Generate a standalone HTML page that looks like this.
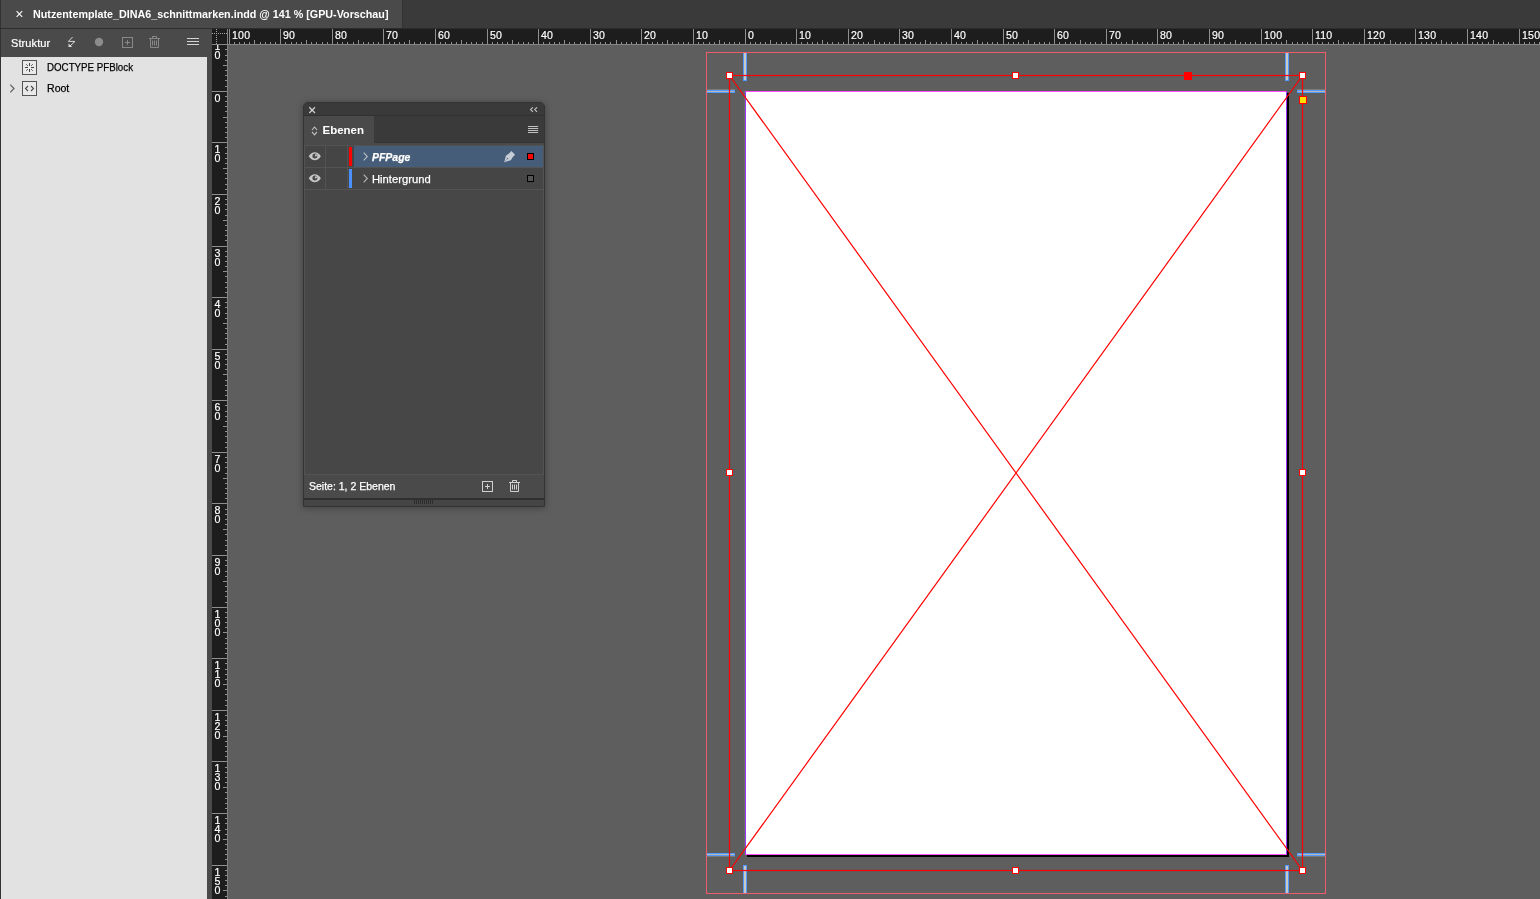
<!DOCTYPE html>
<html lang="de">
<head>
<meta charset="utf-8">
<title>Nutzentemplate_DINA6_schnittmarken.indd @ 141 % [GPU-Vorschau]</title>
<style>
*{box-sizing:border-box;margin:0;padding:0}
html,body{width:1540px;height:899px;overflow:hidden;background:#5e5e5e}
body{position:relative;will-change:transform;font-family:"Liberation Sans",sans-serif;font-size:11px;color:#fff;-webkit-font-smoothing:antialiased}
.abs{position:absolute}
svg{position:absolute;overflow:visible}

/* ---------- document tab bar ---------- */
#tabbar{position:absolute;left:0;top:0;width:1540px;height:29px;background:#3a3a3a;border-bottom:1px solid #2d2d2d}
#tab{position:absolute;left:0;top:0;width:403px;height:28px;background:#4a4a4a;border-left:1px solid #333;border-right:1px solid #323232}
#tab .ttl{position:absolute;left:31.5px;top:7px;font-weight:bold;font-size:11px;line-height:14px;white-space:nowrap;color:#fff;transform-origin:0 0;transform:scaleX(.977)}
#tab svg{left:14px;top:10px}

/* ---------- Struktur panel ---------- */
#struct{position:absolute;left:0;top:29px;width:212px;height:870px;background:#4a4a4a;border-left:1px solid #333}
#struct .hd{position:absolute;left:0;top:0;width:211px;height:28px}
#struct .hd .nm{position:absolute;left:10px;top:7px;font-size:11px;line-height:14px;color:#fff;-webkit-text-stroke:.2px #fff;letter-spacing:.1px}
#struct .bd{position:absolute;left:0;top:28px;width:206px;height:842px;background:#e2e2e2;color:#000}
#struct .row{position:absolute;left:0;width:206px;height:21px}
#struct .row .tx{position:absolute;left:45.5px;top:3px;font-size:11px;line-height:14px;color:#000;white-space:nowrap;transform-origin:0 0;-webkit-text-stroke:.25px #000}
#struct .ico{position:absolute;left:21px;top:3px;width:15px;height:15px;border:1px solid #555;background:#e9e9e9}

/* ---------- rulers ---------- */
#hr{position:absolute;left:212px;top:29px;width:1328px;height:16px;background:#1d1d1d;border-bottom:1px solid #868686;overflow:hidden}
#hr .ticks{left:-212px;top:0;fill:#8f8f8f}
#hr .hl{position:absolute;top:0;margin-left:-212px;font-size:11px;line-height:13px;color:#fff;-webkit-text-stroke:.18px #fff;letter-spacing:.2px;transform-origin:0 0;transform:scaleX(.96)}
#vr{position:absolute;left:212px;top:29px;width:16px;height:870px;background:#1d1d1d;border-right:1px solid #828282;overflow:hidden}
#vr .ticks{left:0;top:0;fill:#8f8f8f}
#vr .vl{position:absolute;left:1.6px;width:7px;text-align:center;font-size:11px;line-height:9px;color:#fff;-webkit-text-stroke:.18px #fff;transform-origin:50% 0;transform:scaleX(.97)}
#corner{position:absolute;left:212px;top:29px;width:16px;height:16px;background:#1d1d1d;border-right:1px solid #828282;border-bottom:1px solid #868686}

/* ---------- canvas / page ---------- */
#slug{position:absolute;left:706px;top:52px;width:620px;height:842px;border:1px solid #ee5c6c}
#shadow{position:absolute;left:747px;top:93px;width:542px;height:764px;background:#000}
#page{position:absolute;left:745px;top:91px;width:542px;height:764px;background:#fff;box-shadow:-1px 0 0 rgba(120,130,105,.45);border-style:solid;border-width:1px;border-color:#ff4dff #9933ff #ff4dff #9933ff}
.cv{position:absolute;width:4px;height:28px;background:#cac8c4;border-left:1px solid #4f99ff;border-right:1px solid #4f99ff}
.cv.t{border-bottom:1px solid #4f99ff}
.cv.b{border-top:1px solid #4f99ff}
.ch{position:absolute;width:28px;height:3px;background:#b9b9b9;border-top:1px solid #4f99ff;border-bottom:1px solid #4f99ff}
.ch.l{border-right:1px solid #4f99ff}
.ch.r{border-left:1px solid #4f99ff}
.ch.u{box-shadow:0 -1px 0 rgba(150,145,135,.55)}
.ch.d{box-shadow:0 1px 0 rgba(150,145,135,.55)}
.hnd{position:absolute;width:7px;height:7px;background:#fff;border:1px solid #f00}

/* ---------- Ebenen panel ---------- */
#lay{position:absolute;left:303px;top:102px;width:242px;height:405px;background:#4a4a4a;border:1px solid #333;border-radius:5px 5px 0 0;box-shadow:0 1px 7px rgba(0,0,0,.32);overflow:hidden}
#lay .tb{position:absolute;left:0;top:0;width:240px;height:13px;background:#3a3a3a;border-bottom:1px solid #303030}
#lay .tabs{position:absolute;left:0;top:13px;width:240px;height:27px;background:#3a3a3a;border-bottom:1px solid #353535}
#lay .tab{position:absolute;left:0;top:0;width:70px;height:28px;background:#4a4a4a}
#lay .tab .nm{position:absolute;left:18.5px;top:6.6px;font-weight:bold;font-size:11.5px;line-height:14px;color:#fff;transform-origin:0 0;transform:scaleX(1.0)}
#lay .ls{position:absolute;left:0;top:42px;width:240px;height:330px;border:1px solid #535353;background:#474747}
#lay .r{position:absolute;left:0;width:238px;height:22px;border-bottom:1px solid #535353;background:#454545}
#lay .r .c1{position:absolute;left:0;top:0;width:21px;height:21px;border-right:1px solid #535353}
#lay .r .c2{position:absolute;left:21px;top:0;width:22px;height:21px;border-right:1px solid #535353}
#lay .r .bar{position:absolute;left:44px;top:1px;width:3px;height:19px}
#lay .r .sel{position:absolute;left:49px;top:0;width:189px;height:21px;background:#465d7a}
#lay .r .tx{position:absolute;left:67px;top:4px;font-size:11px;line-height:14px;color:#fff;white-space:nowrap;transform-origin:0 0;-webkit-text-stroke:.25px #fff}
#lay .r .sq{position:absolute;left:222px;top:7px;width:7px;height:7px;border:1px solid #000}
#lay .ft{position:absolute;left:0;top:372px;width:240px;height:23px}
#lay .ft .tx{position:absolute;left:5.2px;top:4px;font-size:11px;line-height:14px;color:#fff;white-space:nowrap;transform-origin:0 0;transform:scaleX(.955);-webkit-text-stroke:.25px #fff}
#lay .gr{position:absolute;left:0;top:395px;width:240px;height:9px;background:#454545;border-top:2px solid #2f2f2f}
</style>
</head>
<body>

<!-- document tab bar -->
<div id="tabbar">
  <div id="tab">
    <svg width="8" height="8" viewBox="0 0 8 8"><path d="M1.6 1.2L7.2 6.8M7.2 1.2L1.6 6.8" stroke="#fff" stroke-width="1.1" fill="none"/></svg>
    <div class="ttl">Nutzentemplate_DINA6_schnittmarken.indd @ 141 % [GPU-Vorschau]</div>
  </div>
</div>

<!-- Struktur panel -->
<div id="struct">
  <div class="hd">
    <div class="nm">Struktur</div>
    <svg style="left:66px;top:7px" width="10" height="12" viewBox="0 0 10 12"><path d="M5.6 1L1.4 5.4H8L2.6 10.4" stroke="#d8d8d8" stroke-width="1" fill="none"/><path d="M1.5 7.4V11H5.3Z" fill="#d8d8d8"/></svg>
    <svg style="left:93px;top:8px" width="10" height="10" viewBox="0 0 10 10"><circle cx="5" cy="5" r="4.2" fill="#8c8c8c"/></svg>
    <svg style="left:121px;top:8px" width="11" height="11" viewBox="0 0 11 11"><rect x=".5" y=".5" width="10" height="10" fill="none" stroke="#888"/><path d="M3 5.5H8M5.5 3V8" stroke="#888" fill="none"/></svg>
    <svg style="left:148px;top:7px" width="11" height="12" viewBox="0 0 11 12"><path d="M0 2.5H11M3.5 2.5V.5H7.5V2.5M1.5 2.5V11.5H9.5V2.5M3.5 4.5V9.5M5.5 4.5V9.5M7.5 4.5V9.5" stroke="#888" fill="none"/></svg>
    <svg style="left:186px;top:9px" width="12" height="8" viewBox="0 0 12 8"><path d="M0 .5H12M0 3.5H12M0 6.5H12" stroke="#d4d4d4" fill="none"/></svg>
  </div>
  <div class="bd">
    <div class="row" style="top:0">
      <div class="ico"><svg width="13" height="13" viewBox="0 0 13 13" style="left:0;top:0"><path d="M6.5 2V5M6.5 8V11M2 6.5H5M8 6.5H11M3.3 3.3L4.8 4.8M8.2 8.2L9.7 9.7M9.7 3.3L8.2 4.8M3.3 9.7L4.8 8.2" stroke="#444" stroke-width="1" fill="none"/></svg></div>
      <div class="tx" style="transform:scaleX(.885)">DOCTYPE PFBlock</div>
    </div>
    <div class="row" style="top:21px">
      <svg style="left:8px;top:6px" width="6" height="9" viewBox="0 0 6 9"><path d="M1.3 .7L5 4.5L1.3 8.3" stroke="#606060" stroke-width="1.2" fill="none"/></svg>
      <div class="ico"><svg width="13" height="13" viewBox="0 0 13 13" style="left:0;top:0"><path d="M5 4L2.5 6.5L5 9M8 4L10.5 6.5L8 9" stroke="#484848" stroke-width="1.1" fill="none"/></svg></div>
      <div class="tx" style="transform:scaleX(.96)">Root</div>
    </div>
  </div>
</div>

<!-- rulers -->
<div id="hr"><svg class="ticks" width="1540" height="16" viewBox="0 0 1540 16"><rect x="229" y="0" width="1" height="15"/><rect x="234" y="13" width="1" height="2"/><rect x="239" y="13" width="1" height="2"/><rect x="244" y="13" width="1" height="2"/><rect x="249" y="13" width="1" height="2"/><rect x="254" y="11" width="1" height="4"/><rect x="260" y="13" width="1" height="2"/><rect x="265" y="13" width="1" height="2"/><rect x="270" y="13" width="1" height="2"/><rect x="275" y="13" width="1" height="2"/><rect x="280" y="0" width="1" height="15"/><rect x="285" y="13" width="1" height="2"/><rect x="291" y="13" width="1" height="2"/><rect x="296" y="13" width="1" height="2"/><rect x="301" y="13" width="1" height="2"/><rect x="306" y="11" width="1" height="4"/><rect x="311" y="13" width="1" height="2"/><rect x="316" y="13" width="1" height="2"/><rect x="322" y="13" width="1" height="2"/><rect x="327" y="13" width="1" height="2"/><rect x="332" y="0" width="1" height="15"/><rect x="337" y="13" width="1" height="2"/><rect x="342" y="13" width="1" height="2"/><rect x="347" y="13" width="1" height="2"/><rect x="353" y="13" width="1" height="2"/><rect x="358" y="11" width="1" height="4"/><rect x="363" y="13" width="1" height="2"/><rect x="368" y="13" width="1" height="2"/><rect x="373" y="13" width="1" height="2"/><rect x="378" y="13" width="1" height="2"/><rect x="383" y="0" width="1" height="15"/><rect x="389" y="13" width="1" height="2"/><rect x="394" y="13" width="1" height="2"/><rect x="399" y="13" width="1" height="2"/><rect x="404" y="13" width="1" height="2"/><rect x="409" y="11" width="1" height="4"/><rect x="414" y="13" width="1" height="2"/><rect x="420" y="13" width="1" height="2"/><rect x="425" y="13" width="1" height="2"/><rect x="430" y="13" width="1" height="2"/><rect x="435" y="0" width="1" height="15"/><rect x="440" y="13" width="1" height="2"/><rect x="445" y="13" width="1" height="2"/><rect x="451" y="13" width="1" height="2"/><rect x="456" y="13" width="1" height="2"/><rect x="461" y="11" width="1" height="4"/><rect x="466" y="13" width="1" height="2"/><rect x="471" y="13" width="1" height="2"/><rect x="476" y="13" width="1" height="2"/><rect x="482" y="13" width="1" height="2"/><rect x="487" y="0" width="1" height="15"/><rect x="492" y="13" width="1" height="2"/><rect x="497" y="13" width="1" height="2"/><rect x="502" y="13" width="1" height="2"/><rect x="507" y="13" width="1" height="2"/><rect x="512" y="11" width="1" height="4"/><rect x="518" y="13" width="1" height="2"/><rect x="523" y="13" width="1" height="2"/><rect x="528" y="13" width="1" height="2"/><rect x="533" y="13" width="1" height="2"/><rect x="538" y="0" width="1" height="15"/><rect x="543" y="13" width="1" height="2"/><rect x="549" y="13" width="1" height="2"/><rect x="554" y="13" width="1" height="2"/><rect x="559" y="13" width="1" height="2"/><rect x="564" y="11" width="1" height="4"/><rect x="569" y="13" width="1" height="2"/><rect x="574" y="13" width="1" height="2"/><rect x="580" y="13" width="1" height="2"/><rect x="585" y="13" width="1" height="2"/><rect x="590" y="0" width="1" height="15"/><rect x="595" y="13" width="1" height="2"/><rect x="600" y="13" width="1" height="2"/><rect x="605" y="13" width="1" height="2"/><rect x="610" y="13" width="1" height="2"/><rect x="616" y="11" width="1" height="4"/><rect x="621" y="13" width="1" height="2"/><rect x="626" y="13" width="1" height="2"/><rect x="631" y="13" width="1" height="2"/><rect x="636" y="13" width="1" height="2"/><rect x="641" y="0" width="1" height="15"/><rect x="647" y="13" width="1" height="2"/><rect x="652" y="13" width="1" height="2"/><rect x="657" y="13" width="1" height="2"/><rect x="662" y="13" width="1" height="2"/><rect x="667" y="11" width="1" height="4"/><rect x="672" y="13" width="1" height="2"/><rect x="678" y="13" width="1" height="2"/><rect x="683" y="13" width="1" height="2"/><rect x="688" y="13" width="1" height="2"/><rect x="693" y="0" width="1" height="15"/><rect x="698" y="13" width="1" height="2"/><rect x="703" y="13" width="1" height="2"/><rect x="709" y="13" width="1" height="2"/><rect x="714" y="13" width="1" height="2"/><rect x="719" y="11" width="1" height="4"/><rect x="724" y="13" width="1" height="2"/><rect x="729" y="13" width="1" height="2"/><rect x="734" y="13" width="1" height="2"/><rect x="739" y="13" width="1" height="2"/><rect x="745" y="0" width="1" height="15"/><rect x="750" y="13" width="1" height="2"/><rect x="755" y="13" width="1" height="2"/><rect x="760" y="13" width="1" height="2"/><rect x="765" y="13" width="1" height="2"/><rect x="770" y="11" width="1" height="4"/><rect x="776" y="13" width="1" height="2"/><rect x="781" y="13" width="1" height="2"/><rect x="786" y="13" width="1" height="2"/><rect x="791" y="13" width="1" height="2"/><rect x="796" y="0" width="1" height="15"/><rect x="801" y="13" width="1" height="2"/><rect x="807" y="13" width="1" height="2"/><rect x="812" y="13" width="1" height="2"/><rect x="817" y="13" width="1" height="2"/><rect x="822" y="11" width="1" height="4"/><rect x="827" y="13" width="1" height="2"/><rect x="832" y="13" width="1" height="2"/><rect x="838" y="13" width="1" height="2"/><rect x="843" y="13" width="1" height="2"/><rect x="848" y="0" width="1" height="15"/><rect x="853" y="13" width="1" height="2"/><rect x="858" y="13" width="1" height="2"/><rect x="863" y="13" width="1" height="2"/><rect x="868" y="13" width="1" height="2"/><rect x="874" y="11" width="1" height="4"/><rect x="879" y="13" width="1" height="2"/><rect x="884" y="13" width="1" height="2"/><rect x="889" y="13" width="1" height="2"/><rect x="894" y="13" width="1" height="2"/><rect x="899" y="0" width="1" height="15"/><rect x="905" y="13" width="1" height="2"/><rect x="910" y="13" width="1" height="2"/><rect x="915" y="13" width="1" height="2"/><rect x="920" y="13" width="1" height="2"/><rect x="925" y="11" width="1" height="4"/><rect x="930" y="13" width="1" height="2"/><rect x="936" y="13" width="1" height="2"/><rect x="941" y="13" width="1" height="2"/><rect x="946" y="13" width="1" height="2"/><rect x="951" y="0" width="1" height="15"/><rect x="956" y="13" width="1" height="2"/><rect x="961" y="13" width="1" height="2"/><rect x="966" y="13" width="1" height="2"/><rect x="972" y="13" width="1" height="2"/><rect x="977" y="11" width="1" height="4"/><rect x="982" y="13" width="1" height="2"/><rect x="987" y="13" width="1" height="2"/><rect x="992" y="13" width="1" height="2"/><rect x="997" y="13" width="1" height="2"/><rect x="1003" y="0" width="1" height="15"/><rect x="1008" y="13" width="1" height="2"/><rect x="1013" y="13" width="1" height="2"/><rect x="1018" y="13" width="1" height="2"/><rect x="1023" y="13" width="1" height="2"/><rect x="1028" y="11" width="1" height="4"/><rect x="1034" y="13" width="1" height="2"/><rect x="1039" y="13" width="1" height="2"/><rect x="1044" y="13" width="1" height="2"/><rect x="1049" y="13" width="1" height="2"/><rect x="1054" y="0" width="1" height="15"/><rect x="1059" y="13" width="1" height="2"/><rect x="1065" y="13" width="1" height="2"/><rect x="1070" y="13" width="1" height="2"/><rect x="1075" y="13" width="1" height="2"/><rect x="1080" y="11" width="1" height="4"/><rect x="1085" y="13" width="1" height="2"/><rect x="1090" y="13" width="1" height="2"/><rect x="1095" y="13" width="1" height="2"/><rect x="1101" y="13" width="1" height="2"/><rect x="1106" y="0" width="1" height="15"/><rect x="1111" y="13" width="1" height="2"/><rect x="1116" y="13" width="1" height="2"/><rect x="1121" y="13" width="1" height="2"/><rect x="1126" y="13" width="1" height="2"/><rect x="1132" y="11" width="1" height="4"/><rect x="1137" y="13" width="1" height="2"/><rect x="1142" y="13" width="1" height="2"/><rect x="1147" y="13" width="1" height="2"/><rect x="1152" y="13" width="1" height="2"/><rect x="1157" y="0" width="1" height="15"/><rect x="1163" y="13" width="1" height="2"/><rect x="1168" y="13" width="1" height="2"/><rect x="1173" y="13" width="1" height="2"/><rect x="1178" y="13" width="1" height="2"/><rect x="1183" y="11" width="1" height="4"/><rect x="1188" y="13" width="1" height="2"/><rect x="1194" y="13" width="1" height="2"/><rect x="1199" y="13" width="1" height="2"/><rect x="1204" y="13" width="1" height="2"/><rect x="1209" y="0" width="1" height="15"/><rect x="1214" y="13" width="1" height="2"/><rect x="1219" y="13" width="1" height="2"/><rect x="1224" y="13" width="1" height="2"/><rect x="1230" y="13" width="1" height="2"/><rect x="1235" y="11" width="1" height="4"/><rect x="1240" y="13" width="1" height="2"/><rect x="1245" y="13" width="1" height="2"/><rect x="1250" y="13" width="1" height="2"/><rect x="1255" y="13" width="1" height="2"/><rect x="1261" y="0" width="1" height="15"/><rect x="1266" y="13" width="1" height="2"/><rect x="1271" y="13" width="1" height="2"/><rect x="1276" y="13" width="1" height="2"/><rect x="1281" y="13" width="1" height="2"/><rect x="1286" y="11" width="1" height="4"/><rect x="1292" y="13" width="1" height="2"/><rect x="1297" y="13" width="1" height="2"/><rect x="1302" y="13" width="1" height="2"/><rect x="1307" y="13" width="1" height="2"/><rect x="1312" y="0" width="1" height="15"/><rect x="1317" y="13" width="1" height="2"/><rect x="1322" y="13" width="1" height="2"/><rect x="1328" y="13" width="1" height="2"/><rect x="1333" y="13" width="1" height="2"/><rect x="1338" y="11" width="1" height="4"/><rect x="1343" y="13" width="1" height="2"/><rect x="1348" y="13" width="1" height="2"/><rect x="1353" y="13" width="1" height="2"/><rect x="1359" y="13" width="1" height="2"/><rect x="1364" y="0" width="1" height="15"/><rect x="1369" y="13" width="1" height="2"/><rect x="1374" y="13" width="1" height="2"/><rect x="1379" y="13" width="1" height="2"/><rect x="1384" y="13" width="1" height="2"/><rect x="1390" y="11" width="1" height="4"/><rect x="1395" y="13" width="1" height="2"/><rect x="1400" y="13" width="1" height="2"/><rect x="1405" y="13" width="1" height="2"/><rect x="1410" y="13" width="1" height="2"/><rect x="1415" y="0" width="1" height="15"/><rect x="1421" y="13" width="1" height="2"/><rect x="1426" y="13" width="1" height="2"/><rect x="1431" y="13" width="1" height="2"/><rect x="1436" y="13" width="1" height="2"/><rect x="1441" y="11" width="1" height="4"/><rect x="1446" y="13" width="1" height="2"/><rect x="1451" y="13" width="1" height="2"/><rect x="1457" y="13" width="1" height="2"/><rect x="1462" y="13" width="1" height="2"/><rect x="1467" y="0" width="1" height="15"/><rect x="1472" y="13" width="1" height="2"/><rect x="1477" y="13" width="1" height="2"/><rect x="1482" y="13" width="1" height="2"/><rect x="1488" y="13" width="1" height="2"/><rect x="1493" y="11" width="1" height="4"/><rect x="1498" y="13" width="1" height="2"/><rect x="1503" y="13" width="1" height="2"/><rect x="1508" y="13" width="1" height="2"/><rect x="1513" y="13" width="1" height="2"/><rect x="1519" y="0" width="1" height="15"/><rect x="1524" y="13" width="1" height="2"/><rect x="1529" y="13" width="1" height="2"/><rect x="1534" y="13" width="1" height="2"/><rect x="1539" y="13" width="1" height="2"/></svg><span class="hl" style="left:231.7px">100</span><span class="hl" style="left:282.7px">90</span><span class="hl" style="left:334.7px">80</span><span class="hl" style="left:385.7px">70</span><span class="hl" style="left:437.7px">60</span><span class="hl" style="left:489.7px">50</span><span class="hl" style="left:540.7px">40</span><span class="hl" style="left:592.7px">30</span><span class="hl" style="left:643.7px">20</span><span class="hl" style="left:695.7px">10</span><span class="hl" style="left:747.7px">0</span><span class="hl" style="left:798.7px">10</span><span class="hl" style="left:850.7px">20</span><span class="hl" style="left:901.7px">30</span><span class="hl" style="left:953.7px">40</span><span class="hl" style="left:1005.7px">50</span><span class="hl" style="left:1056.7px">60</span><span class="hl" style="left:1108.7px">70</span><span class="hl" style="left:1159.7px">80</span><span class="hl" style="left:1211.7px">90</span><span class="hl" style="left:1263.7px">100</span><span class="hl" style="left:1314.7px">110</span><span class="hl" style="left:1366.7px">120</span><span class="hl" style="left:1417.7px">130</span><span class="hl" style="left:1469.7px">140</span><span class="hl" style="left:1521.7px">150</span></div>
<div id="vr"><svg class="ticks" width="16" height="870" viewBox="0 0 16 870"><rect x="13" y="20" width="2" height="1"/><rect x="13" y="26" width="2" height="1"/><rect x="13" y="31" width="2" height="1"/><rect x="11" y="36" width="4" height="1"/><rect x="13" y="41" width="2" height="1"/><rect x="13" y="46" width="2" height="1"/><rect x="13" y="51" width="2" height="1"/><rect x="13" y="57" width="2" height="1"/><rect x="0" y="62" width="15" height="1"/><rect x="13" y="67" width="2" height="1"/><rect x="13" y="72" width="2" height="1"/><rect x="13" y="77" width="2" height="1"/><rect x="13" y="82" width="2" height="1"/><rect x="11" y="88" width="4" height="1"/><rect x="13" y="93" width="2" height="1"/><rect x="13" y="98" width="2" height="1"/><rect x="13" y="103" width="2" height="1"/><rect x="13" y="108" width="2" height="1"/><rect x="0" y="113" width="15" height="1"/><rect x="13" y="118" width="2" height="1"/><rect x="13" y="124" width="2" height="1"/><rect x="13" y="129" width="2" height="1"/><rect x="13" y="134" width="2" height="1"/><rect x="11" y="139" width="4" height="1"/><rect x="13" y="144" width="2" height="1"/><rect x="13" y="149" width="2" height="1"/><rect x="13" y="155" width="2" height="1"/><rect x="13" y="160" width="2" height="1"/><rect x="0" y="165" width="15" height="1"/><rect x="13" y="170" width="2" height="1"/><rect x="13" y="175" width="2" height="1"/><rect x="13" y="180" width="2" height="1"/><rect x="13" y="186" width="2" height="1"/><rect x="11" y="191" width="4" height="1"/><rect x="13" y="196" width="2" height="1"/><rect x="13" y="201" width="2" height="1"/><rect x="13" y="206" width="2" height="1"/><rect x="13" y="211" width="2" height="1"/><rect x="0" y="217" width="15" height="1"/><rect x="13" y="222" width="2" height="1"/><rect x="13" y="227" width="2" height="1"/><rect x="13" y="232" width="2" height="1"/><rect x="13" y="237" width="2" height="1"/><rect x="11" y="242" width="4" height="1"/><rect x="13" y="247" width="2" height="1"/><rect x="13" y="253" width="2" height="1"/><rect x="13" y="258" width="2" height="1"/><rect x="13" y="263" width="2" height="1"/><rect x="0" y="268" width="15" height="1"/><rect x="13" y="273" width="2" height="1"/><rect x="13" y="278" width="2" height="1"/><rect x="13" y="284" width="2" height="1"/><rect x="13" y="289" width="2" height="1"/><rect x="11" y="294" width="4" height="1"/><rect x="13" y="299" width="2" height="1"/><rect x="13" y="304" width="2" height="1"/><rect x="13" y="309" width="2" height="1"/><rect x="13" y="315" width="2" height="1"/><rect x="0" y="320" width="15" height="1"/><rect x="13" y="325" width="2" height="1"/><rect x="13" y="330" width="2" height="1"/><rect x="13" y="335" width="2" height="1"/><rect x="13" y="340" width="2" height="1"/><rect x="11" y="345" width="4" height="1"/><rect x="13" y="351" width="2" height="1"/><rect x="13" y="356" width="2" height="1"/><rect x="13" y="361" width="2" height="1"/><rect x="13" y="366" width="2" height="1"/><rect x="0" y="371" width="15" height="1"/><rect x="13" y="376" width="2" height="1"/><rect x="13" y="382" width="2" height="1"/><rect x="13" y="387" width="2" height="1"/><rect x="13" y="392" width="2" height="1"/><rect x="11" y="397" width="4" height="1"/><rect x="13" y="402" width="2" height="1"/><rect x="13" y="407" width="2" height="1"/><rect x="13" y="413" width="2" height="1"/><rect x="13" y="418" width="2" height="1"/><rect x="0" y="423" width="15" height="1"/><rect x="13" y="428" width="2" height="1"/><rect x="13" y="433" width="2" height="1"/><rect x="13" y="438" width="2" height="1"/><rect x="13" y="444" width="2" height="1"/><rect x="11" y="449" width="4" height="1"/><rect x="13" y="454" width="2" height="1"/><rect x="13" y="459" width="2" height="1"/><rect x="13" y="464" width="2" height="1"/><rect x="13" y="469" width="2" height="1"/><rect x="0" y="474" width="15" height="1"/><rect x="13" y="480" width="2" height="1"/><rect x="13" y="485" width="2" height="1"/><rect x="13" y="490" width="2" height="1"/><rect x="13" y="495" width="2" height="1"/><rect x="11" y="500" width="4" height="1"/><rect x="13" y="505" width="2" height="1"/><rect x="13" y="511" width="2" height="1"/><rect x="13" y="516" width="2" height="1"/><rect x="13" y="521" width="2" height="1"/><rect x="0" y="526" width="15" height="1"/><rect x="13" y="531" width="2" height="1"/><rect x="13" y="536" width="2" height="1"/><rect x="13" y="542" width="2" height="1"/><rect x="13" y="547" width="2" height="1"/><rect x="11" y="552" width="4" height="1"/><rect x="13" y="557" width="2" height="1"/><rect x="13" y="562" width="2" height="1"/><rect x="13" y="567" width="2" height="1"/><rect x="13" y="573" width="2" height="1"/><rect x="0" y="578" width="15" height="1"/><rect x="13" y="583" width="2" height="1"/><rect x="13" y="588" width="2" height="1"/><rect x="13" y="593" width="2" height="1"/><rect x="13" y="598" width="2" height="1"/><rect x="11" y="603" width="4" height="1"/><rect x="13" y="609" width="2" height="1"/><rect x="13" y="614" width="2" height="1"/><rect x="13" y="619" width="2" height="1"/><rect x="13" y="624" width="2" height="1"/><rect x="0" y="629" width="15" height="1"/><rect x="13" y="634" width="2" height="1"/><rect x="13" y="640" width="2" height="1"/><rect x="13" y="645" width="2" height="1"/><rect x="13" y="650" width="2" height="1"/><rect x="11" y="655" width="4" height="1"/><rect x="13" y="660" width="2" height="1"/><rect x="13" y="665" width="2" height="1"/><rect x="13" y="671" width="2" height="1"/><rect x="13" y="676" width="2" height="1"/><rect x="0" y="681" width="15" height="1"/><rect x="13" y="686" width="2" height="1"/><rect x="13" y="691" width="2" height="1"/><rect x="13" y="696" width="2" height="1"/><rect x="13" y="701" width="2" height="1"/><rect x="11" y="707" width="4" height="1"/><rect x="13" y="712" width="2" height="1"/><rect x="13" y="717" width="2" height="1"/><rect x="13" y="722" width="2" height="1"/><rect x="13" y="727" width="2" height="1"/><rect x="0" y="732" width="15" height="1"/><rect x="13" y="738" width="2" height="1"/><rect x="13" y="743" width="2" height="1"/><rect x="13" y="748" width="2" height="1"/><rect x="13" y="753" width="2" height="1"/><rect x="11" y="758" width="4" height="1"/><rect x="13" y="763" width="2" height="1"/><rect x="13" y="769" width="2" height="1"/><rect x="13" y="774" width="2" height="1"/><rect x="13" y="779" width="2" height="1"/><rect x="0" y="784" width="15" height="1"/><rect x="13" y="789" width="2" height="1"/><rect x="13" y="794" width="2" height="1"/><rect x="13" y="800" width="2" height="1"/><rect x="13" y="805" width="2" height="1"/><rect x="11" y="810" width="4" height="1"/><rect x="13" y="815" width="2" height="1"/><rect x="13" y="820" width="2" height="1"/><rect x="13" y="825" width="2" height="1"/><rect x="13" y="830" width="2" height="1"/><rect x="0" y="836" width="15" height="1"/><rect x="13" y="841" width="2" height="1"/><rect x="13" y="846" width="2" height="1"/><rect x="13" y="851" width="2" height="1"/><rect x="13" y="856" width="2" height="1"/><rect x="11" y="861" width="4" height="1"/><rect x="13" y="867" width="2" height="1"/></svg><span class="vl" style="top:13px">1<br>0</span><span class="vl" style="top:65px">0</span><span class="vl" style="top:116px">1<br>0</span><span class="vl" style="top:168px">2<br>0</span><span class="vl" style="top:220px">3<br>0</span><span class="vl" style="top:271px">4<br>0</span><span class="vl" style="top:323px">5<br>0</span><span class="vl" style="top:374px">6<br>0</span><span class="vl" style="top:426px">7<br>0</span><span class="vl" style="top:477px">8<br>0</span><span class="vl" style="top:529px">9<br>0</span><span class="vl" style="top:581px">1<br>0<br>0</span><span class="vl" style="top:632px">1<br>1<br>0</span><span class="vl" style="top:684px">1<br>2<br>0</span><span class="vl" style="top:735px">1<br>3<br>0</span><span class="vl" style="top:787px">1<br>4<br>0</span><span class="vl" style="top:839px">1<br>5<br>0</span></div>
<div id="corner">
  <svg width="16" height="16" viewBox="0 0 16 16" style="left:0;top:0"><path d="M0 4.5H15M4.5 0V15" stroke="#a4a4a4" stroke-width="1" stroke-dasharray="1 1" fill="none"/></svg>
</div>

<!-- pasteboard -->
<div id="slug"></div>
<div id="shadow"></div>
<div id="page"></div>
<div class="cv t" style="left:743px;top:53px"></div>
<div class="cv t" style="left:1285px;top:53px"></div>
<div class="cv b" style="left:743px;top:865px"></div>
<div class="cv b" style="left:1285px;top:865px"></div>
<div class="ch l u" style="left:707px;top:90px"></div>
<div class="ch r u" style="left:1297px;top:90px"></div>
<div class="ch l d" style="left:707px;top:853px"></div>
<div class="ch r d" style="left:1297px;top:853px"></div>
<svg width="1540" height="899" viewBox="0 0 1540 899" style="left:0;top:0">
  <g stroke="#ff0000" stroke-width="1.2" fill="none">
    <rect x="729.5" y="75.5" width="573" height="795"/>
    <path d="M729.5 75.5L1302.5 870.5M1302.5 75.5L729.5 870.5"/>
  </g>
</svg>
<div class="hnd" style="left:726px;top:72px"></div>
<div class="hnd" style="left:1012px;top:72px"></div>
<div class="hnd" style="left:1299px;top:72px"></div>
<div class="hnd" style="left:726px;top:469px"></div>
<div class="hnd" style="left:1299px;top:469px"></div>
<div class="hnd" style="left:726px;top:867px"></div>
<div class="hnd" style="left:1012px;top:867px"></div>
<div class="hnd" style="left:1299px;top:867px"></div>
<div class="abs" style="left:1184px;top:72px;width:8px;height:8px;background:#f00"></div>
<div class="hnd" style="left:1299px;top:96px;width:8px;height:8px;background:#ffe000"></div>

<!-- Ebenen panel -->
<div id="lay">
  <div class="tb">
    <svg style="left:5px;top:4px" width="7" height="7" viewBox="0 0 7 7"><path d="M.3 .3L6 6M6 .3L.3 6" stroke="#d0d0d0" stroke-width="1.25" fill="none"/></svg>
    <svg style="left:226px;top:4px" width="8" height="6" viewBox="0 0 8 6"><path d="M2.9 .3L.6 2.6L2.9 4.9M7 .3L4.7 2.6L7 4.9" stroke="#c6c6c6" stroke-width="1.15" fill="none" stroke-linejoin="miter"/></svg>
  </div>
  <div class="tabs">
    <div class="tab">
      <svg style="left:7px;top:10px" width="7" height="10" viewBox="0 0 7 10"><path d="M1 4L3.5 1L6 4M1 5.8L3.5 8.8L6 5.8" stroke="#c4c4c4" stroke-width="1.1" fill="none"/></svg>
      <div class="nm">Ebenen</div>
    </div>
    <svg style="left:224px;top:10px" width="11" height="8" viewBox="0 0 11 8"><path d="M0 .5H10.2M0 2.5H10.2M0 4.5H10.2M0 6.5H10.2" stroke="#c0c0c0" stroke-width="1" fill="none"/></svg>
  </div>
  <div class="ls">
    <div class="r" style="top:0">
      <div class="c1"><svg style="left:3px;top:5px" width="14" height="11" viewBox="0 0 14 11"><g transform="translate(.5 .7)"><path d="M.2 4.5C1.9 1.7 4.1 .5 6.3 .5S10.7 1.7 12.4 4.5C10.7 7.3 8.5 8.5 6.3 8.5S1.9 7.3 .2 4.5Z" fill="#c8c8c8"/><circle cx="6.4" cy="4.4" r="2.5" fill="#4a4a4a"/><circle cx="7.4" cy="3.6" r="1.1" fill="#c8c8c8"/></g></svg></div>
      <div class="c2"></div>
      <div class="bar" style="background:#ff0000"></div>
      <div class="sel"></div>
      <svg style="left:58px;top:6px" width="5" height="9" viewBox="0 0 5 9"><path d="M.7 .7L4.3 4.5L.7 8.3" stroke="#b8bcc2" stroke-width="1.1" fill="none"/></svg>
      <div class="tx" style="font-weight:bold;font-style:italic;transform:scaleX(.95)">PFPage</div>
      <svg style="left:198px;top:5px" width="13" height="12" viewBox="0 0 13 12"><path d="M8.4 0L12.1 3.7L9.8 6L7.8 9.2L1.2 11.2L2.9 4.7L6 2.4Z" fill="#c5ccd6"/><circle cx="4.5" cy="7.4" r=".75" fill="#5a6f8a"/><path d="M2 10.4L4 8" stroke="#7f8fa6" stroke-width=".6"/></svg>
      <div class="sq" style="background:#f00"></div>
    </div>
    <div class="r" style="top:22px">
      <div class="c1"><svg style="left:3px;top:5px" width="14" height="11" viewBox="0 0 14 11"><g transform="translate(.5 .7)"><path d="M.2 4.5C1.9 1.7 4.1 .5 6.3 .5S10.7 1.7 12.4 4.5C10.7 7.3 8.5 8.5 6.3 8.5S1.9 7.3 .2 4.5Z" fill="#c8c8c8"/><circle cx="6.4" cy="4.4" r="2.5" fill="#4a4a4a"/><circle cx="7.4" cy="3.6" r="1.1" fill="#c8c8c8"/></g></svg></div>
      <div class="c2"></div>
      <div class="bar" style="background:#4a90ff"></div>
      <svg style="left:58px;top:6px" width="5" height="9" viewBox="0 0 5 9"><path d="M.7 .7L4.3 4.5L.7 8.3" stroke="#b4b4b4" stroke-width="1.1" fill="none"/></svg>
      <div class="tx" style="transform:scaleX(1.02)">Hintergrund</div>
      <div class="sq" style="background:#555"></div>
    </div>
  </div>
  <div class="ft">
    <div class="tx">Seite: 1, 2 Ebenen</div>
    <svg style="left:178px;top:6px" width="11" height="11" viewBox="0 0 11 11"><rect x=".5" y=".5" width="10" height="10" fill="none" stroke="#d0d0d0"/><path d="M3 5.5H8M5.5 3V8" stroke="#d0d0d0" fill="none"/></svg>
    <svg style="left:205px;top:5px" width="11" height="12" viewBox="0 0 11 12"><path d="M0 2.5H11M3.5 2.5V.5H7.5V2.5M1.5 2.5V11.5H9.5V2.5M3.5 4.5V9.5M5.5 4.5V9.5M7.5 4.5V9.5" stroke="#d0d0d0" fill="none"/></svg>
  </div>
  <div class="gr">
    <svg style="left:110px;top:0" width="20" height="4" viewBox="0 0 20 4"><path d="M.5 0V4M2.5 0V4M4.5 0V4M6.5 0V4M8.5 0V4M10.5 0V4M12.5 0V4M14.5 0V4M16.5 0V4M18.5 0V4" stroke="#2d2d2d" stroke-width="1" fill="none"/></svg>
  </div>
</div>

</body>
</html>
